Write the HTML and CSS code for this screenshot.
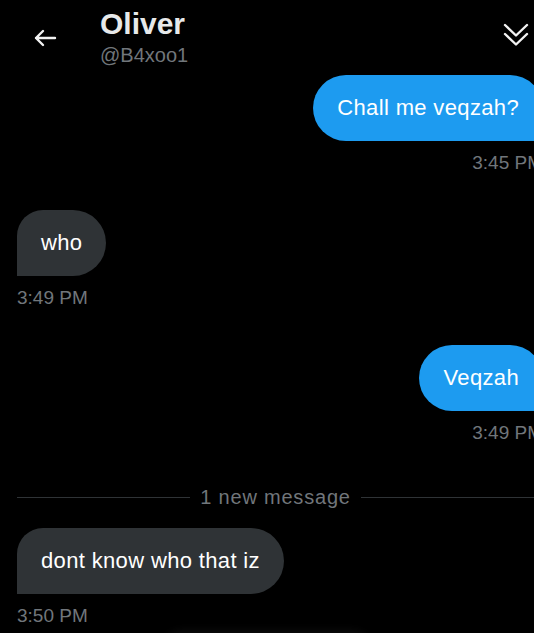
FILE: index.html
```html
<!DOCTYPE html>
<html>
<head>
<meta charset="utf-8">
<link rel="stylesheet" href="styles.css">
</head>
<body>
<div class="screen">
  <header class="header">
    <svg class="back" width="24" height="24" viewBox="0 0 24 24" fill="none" stroke="#f2f2f2" stroke-width="2.4" stroke-linecap="round" stroke-linejoin="round"><path d="M22 12H3M10 5L3 12L10 19"/></svg>
    <div class="who-block">
      <div class="name">Oliver</div>
      <div class="handle">@B4xoo1</div>
    </div>
    <svg class="chev" width="26" height="26" viewBox="0 0 26 26" fill="none" stroke="#f2f2f2" stroke-width="2.4" stroke-linecap="round" stroke-linejoin="round"><path d="M2 3L13 13.5L24 3M2 12L13 22.5L24 12"/></svg>
  </header>

  <div class="chat">
    <div class="msg sent first">
      <div class="bubble">Chall me veqzah?</div>
      <div class="time">3:45 PM</div>
    </div>
    <div class="msg recv">
      <div class="bubble">who</div>
      <div class="time">3:49 PM</div>
    </div>
    <div class="msg sent">
      <div class="bubble">Veqzah</div>
      <div class="time">3:49 PM</div>
    </div>
    <div class="divider"><span class="line"></span><span class="label">1 new message</span><span class="line"></span></div>
    <div class="msg recv after-divider">
      <div class="bubble">dont know who that iz</div>
      <div class="time">3:50 PM</div>
    </div>
    <div class="glow"></div>
  </div>
</div>
</body>
</html>
```

FILE: styles.css
```css
html, body {
  margin: 0;
  padding: 0;
  background: #000;
}
body {
  width: 534px;
  height: 633px;
  overflow: hidden;
  font-family: "Liberation Sans", Arial, sans-serif;
  color: #e7e9ea;
}
.screen {
  width: 560px;
}
.header {
  display: flex;
  align-items: flex-start;
  padding: 4px 0 0 33px;
  width: 534px;
  box-sizing: border-box;
}
.back {
  margin-top: 22px;
  flex: none;
}
.who-block {
  margin-left: 43px;
  display: flex;
  flex-direction: column;
}
.name {
  font-size: 30px;
  font-weight: 700;
  line-height: 39px;
  color: #e7e9ea;
}
.handle {
  font-size: 20px;
  line-height: 24px;
  color: #71767b;
}
.chev {
  margin-left: auto;
  margin-right: 5px;
  margin-top: 18px;
  flex: none;
}
.chat {
  width: 526px;
  padding-left: 17px;
  display: flex;
  flex-direction: column;
}
.msg {
  display: flex;
  flex-direction: column;
  margin-top: 36px;
}
.msg.first {
  margin-top: 8px;
}
.msg.sent {
  align-items: flex-end;
}
.msg.recv {
  align-items: flex-start;
}
.bubble {
  font-size: 22px;
  line-height: 26px;
  letter-spacing: 0.35px;
  padding: 20px 24px;
  color: #fff;
}
.sent .bubble {
  background: #1d9bf0;
  border-radius: 33px 33px 0 33px;
}
.recv .bubble {
  background: #2f3336;
  border-radius: 26px 33px 33px 0;
}
.time {
  margin-top: 10px;
  font-size: 19px;
  line-height: 23px;
  color: #71767b;
}
.sent .time {
  text-align: right;
}
.divider {
  margin-top: 41px;
  display: flex;
  align-items: center;
  gap: 10px;
  width: 517px;
}
.divider .line {
  flex: 1;
  height: 1px;
  background: #2f3336;
}
.divider .label {
  font-size: 20px;
  line-height: 24px;
  font-weight: 500;
  letter-spacing: 0.8px;
  color: #71767b;
}
.msg.after-divider {
  margin-top: 19px;
}
.glow {
  margin: 8px 0 0 150px;
  width: 200px;
  height: 30px;
  border-radius: 15px;
  background: #0c0c0c;
  box-shadow: 0 0 10px 4px rgba(40, 40, 40, 0.35);
}
```
